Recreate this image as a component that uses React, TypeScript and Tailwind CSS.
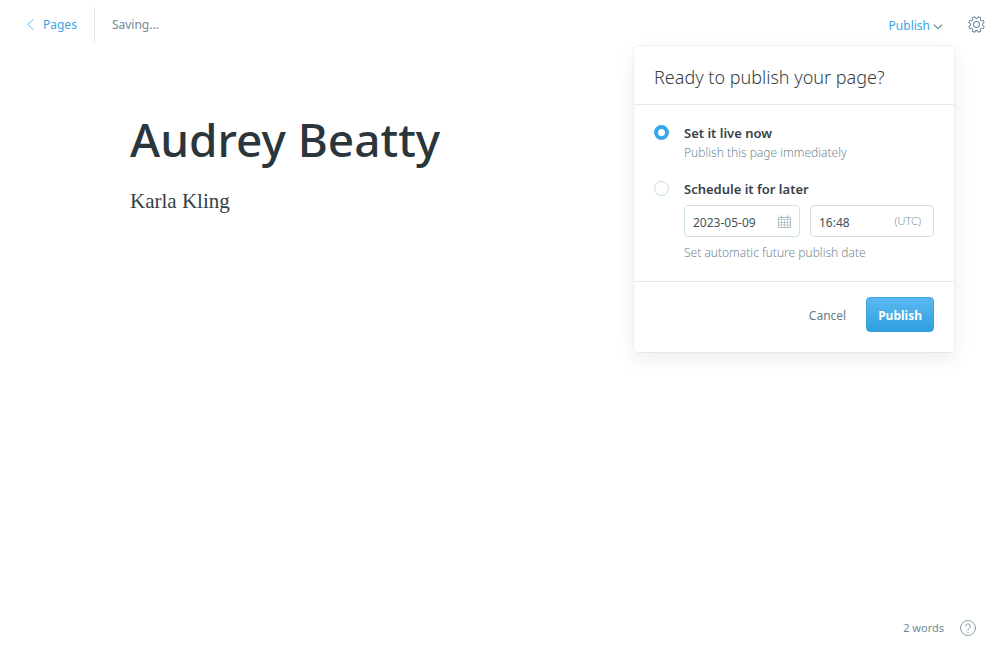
import { useState } from "react";

function ChevronLeft() {
  return (
    <svg viewBox="0 0 9 14" className="h-[13px] w-[9px]" fill="none" stroke="#55b4ea" strokeWidth="1" strokeLinecap="round" strokeLinejoin="round" aria-hidden="true">
      <path d="M7.5 1.5 1.5 7l6 5.5" />
    </svg>
  );
}

function ChevronDown() {
  return (
    <svg viewBox="0 0 10 6" className="mt-0.5 h-1.5 w-2.5" fill="none" stroke="#5d8494" strokeWidth="1.1" strokeLinecap="round" strokeLinejoin="round" aria-hidden="true">
      <path d="M1.2.9 5 4.7 8.8.9" />
    </svg>
  );
}

function polar(radius: number, degrees: number) {
  const angle = (degrees * Math.PI) / 180;
  return `${(radius * Math.cos(angle)).toFixed(2)} ${(radius * Math.sin(angle)).toFixed(2)}`;
}

// Eight flat teeth joined by rounded valleys.
const gearPath =
  Array.from({ length: 8 }, (_, tooth) => {
    const centre = 22.5 + tooth * 45;
    return `${tooth === 0 ? `M${polar(11.6, centre - 9)}` : ""}L${polar(11.6, centre + 9)}Q${polar(6, centre + 22.5)} ${polar(11.6, centre + 36)}`;
  }).join("") + "Z";

function GearIcon() {
  return (
    <svg viewBox="-12.5 -12.5 25 25" className="size-[17px]" fill="none" stroke="#738a94" strokeWidth="1.5" strokeLinecap="round" strokeLinejoin="round" aria-hidden="true">
      <path d={gearPath} />
      <circle r="4.300" />
    </svg>
  );
}

function CalendarIcon() {
  return (
    <svg viewBox="0 0 13 13" className="size-[13px] shrink-0" fill="none" stroke="#b4c0c7" strokeWidth="1" aria-hidden="true">
      <path d="M.5 2.500h12v10H.5z" />
      <path d="M.5 4.500h12M1 7.500h11M1 10h11M3.500 5v7.500M6.500 5v7.500M9.500 5v7.500" strokeWidth=".8" />
      <path d="M3.500.5v3M9.500.5v3" strokeWidth="1.500" />
    </svg>
  );
}

function HelpIcon() {
  return (
    <svg viewBox="0 0 24 24" className="size-4" fill="none" stroke="#7d95a1" strokeWidth="1.400" strokeLinecap="round" strokeLinejoin="round" aria-hidden="true">
      <circle cx="12" cy="12" r="11.200" />
      <path d="M8.500 9.200a3.500 3.500 0 1 1 5.200 3.100c-1.200.6-1.700 1.300-1.700 2.500v.6" />
      <path d="M12 18.400v.2" strokeWidth="1.800" />
    </svg>
  );
}

const radioClass =
  "mt-px size-[15px] shrink-0 appearance-none rounded-full border border-[#c5dcea] bg-white checked:border-4 checked:border-[#37a7e8]";

const fieldClass = "flex h-8 items-center rounded-sm border border-[#cfe0ea] bg-white px-2";

function PublishMenu() {
  const [mode, setMode] = useState("now");
  const [date, setDate] = useState("2023-05-09");
  const [time, setTime] = useState("16:48");

  return (
    <form
      onSubmit={(event) => event.preventDefault()}
      className="absolute top-full right-[46px] z-10 w-80 rounded bg-white shadow-[0_0_0_1px_rgba(99,114,130,0.08),0_8px_20px_rgba(27,39,51,0.08)]"
    >
      <h2 className="border-b border-[#dfecf3] px-5 pt-[17px] pb-[13px] text-lg leading-7 font-light text-[#343f44]">
        Ready to publish your page?
      </h2>
      <div className="flex flex-col gap-[17px] border-b border-[#dfecf3] px-5 pt-[19px] pb-[19px]">
        <div className="flex gap-[15px]">
          <input id="live-now" type="radio" name="mode" checked={mode === "now"} onChange={() => setMode("now")} aria-describedby="now-note" className={radioClass} />
          <div>
            <label htmlFor="live-now" className="block text-[13px] leading-[18px] font-semibold text-[#394247]">
              Set it live now
            </label>
            <p id="now-note" className="pt-px text-xs leading-5 font-light text-[#738a94]">Publish this page immediately</p>
          </div>
        </div>
        <div className="flex gap-[15px]">
          <input id="later" type="radio" name="mode" checked={mode === "later"} onChange={() => setMode("later")} aria-describedby="later-note" className={radioClass} />
          <div className="min-w-0 flex-1">
            <label htmlFor="later" className="block text-[13px] leading-[18px] font-semibold text-[#394247]">
              Schedule it for later
            </label>
            <div className="mt-[7px] flex gap-2.5">
              <div className={`${fieldClass} w-29 shrink-0`}>
                <input aria-label="Publish date" value={date} onChange={(event) => setDate(event.target.value)} className="w-full min-w-0 pt-1 text-xs text-[#455157] outline-none" />
                <CalendarIcon />
              </div>
              <div className={`${fieldClass} min-w-0 flex-1`}>
                <input aria-label="Publish time in UTC" value={time} onChange={(event) => setTime(event.target.value)} className="w-full min-w-0 pt-1 text-xs text-[#455157] outline-none" />
                <span className="pr-1 text-[11px] font-light text-[#7d95a1]">(UTC)</span>
              </div>
            </div>
            <p id="later-note" className="mt-[7px] text-xs leading-[18px] font-light text-[#738a94]">Set automatic future publish date</p>
          </div>
        </div>
      </div>
      <div className="flex items-center justify-end gap-5 px-5 pt-[15px] pb-5">
        <button type="button" className="pt-0.5 text-xs text-[#667c86]">Cancel</button>
        <button type="submit" className="h-[35px] rounded border border-[#3aa5e2] bg-linear-to-b from-[#5bb9f0] to-[#2b9fe0] px-[11px] pt-0.5 text-xs font-bold text-white">
          Publish
        </button>
      </div>
    </form>
  );
}

export default function App() {
  return (
    <div className="flex min-h-screen flex-col bg-white font-['Noto_Sans','Open_Sans',sans-serif]">
      <header className="relative flex items-start justify-between pt-[7px] pr-[15px] pb-1 pl-[26px]">
        <div className="flex h-[35px] items-center text-xs">
          <a href="#pages" className="flex h-full items-center gap-2 border-r border-[#dfecf3] pr-[17px] text-[#3aa5e2]">
            <ChevronLeft />
            Pages
          </a>
          <span className="pl-[17px] text-[#738a94]">Saving...</span>
        </div>
        <div className="flex h-[35px] items-center gap-[25px]">
          <button type="button" aria-expanded="true" className="flex items-center gap-[3px] pt-0.5 text-xs text-[#3aa5e2]">
            Publish
            <ChevronDown />
          </button>
          <button type="button" aria-label="Settings">
            <GearIcon />
          </button>
        </div>
        <PublishMenu />
      </header>
      <main className="mx-auto w-full max-w-[740px] flex-1 pt-[61px]">
        <h1 className="text-[46px] leading-[64px] font-medium text-[#2b363c]">Audrey Beatty</h1>
        <p className="mt-3.5 font-['Liberation_Serif',serif] text-[21px] leading-8 text-[#343f44]">Karla Kling</p>
      </main>
      <footer className="flex items-center justify-end gap-4 px-6 pb-6 text-[11px] leading-4 text-[#738a94]">
        <span>2 words</span>
        <a href="#help" aria-label="Help">
          <HelpIcon />
        </a>
      </footer>
    </div>
  );
}
